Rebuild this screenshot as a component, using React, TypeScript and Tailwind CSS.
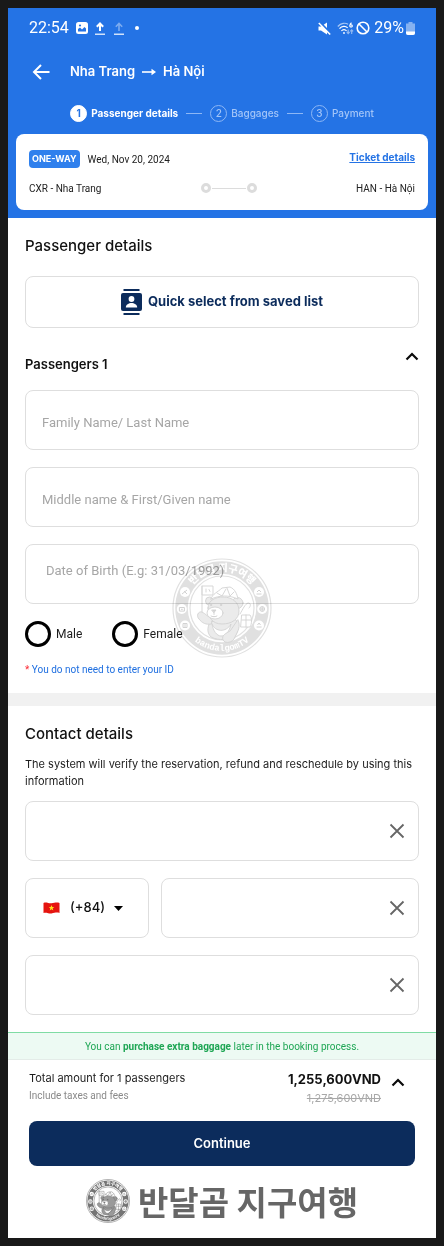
import { FC, ReactNode } from "react";

interface EmblemProps {
  id: string;
  band: string;
  fill: string;
  line: string;
  className?: string;
}

interface TextFieldProps {
  label: string;
  placeholder?: string;
  type?: string;
  inputClassName?: string;
}

const steps = ["Passenger details", "Baggages", "Payment"];

// --- Round bear logo, used as a faint mark and in the footer ---
const Emblem: FC<EmblemProps> = ({ id, band, fill, line, className }) => (
  <svg viewBox="0 0 100 100" className={className} aria-hidden="true">
    <defs>
      <path id={`${id}-top`} d="M13 50a37 37 0 0 1 74 0" />
      <path id={`${id}-bottom`} d="M7 50a43 43 0 0 0 86 0" />
    </defs>
    <circle cx="50" cy="50" r="49" fill="white" stroke={band} strokeWidth="1.2" />
    <circle cx="50" cy="50" r="40.5" fill="none" stroke={band} strokeWidth="12.5" />
    <circle cx="50" cy="50" r="32" fill="white" stroke={band} strokeWidth="1.2" />
    <text
      fill="white"
      fontSize="10"
      fontWeight="900"
      textAnchor="middle"
      fontFamily="'Noto Sans CJK KR', sans-serif"
    >
      <textPath href={`#${id}-top`} startOffset="50%">
        반달곰 지구여행
      </textPath>
    </text>
    <text
      fill="white"
      fontSize="9"
      fontWeight="700"
      textAnchor="middle"
      fontFamily="'Liberation Mono', monospace"
    >
      <textPath href={`#${id}-bottom`} startOffset="50%">
        bandalgomTV
      </textPath>
    </text>
    <g fill="white">
      <circle cx="13" cy="34" r="5" />
      <circle cx="9.8" cy="51" r="5" />
      <circle cx="13" cy="67.5" r="5" />
      <circle cx="87" cy="34" r="5" />
      <circle cx="90.2" cy="51" r="5" />
      <circle cx="87" cy="67.5" r="5" />
    </g>
    <g fill="none" stroke={line} strokeWidth="1">
      <path d="M10 36l5-4M12 33l3 3" />
      <path d="M7.4 49.5h5v3.6h-5zM9 51.3h1.8" />
      <path d="M11 65.5h4v4h-4zM13 65.5v4" />
      <path d="M84.5 36h5M85 34l2-2 2 2" />
      <circle cx="90.2" cy="51" r="2.4" />
      <path d="M87.8 51h4.8M90.2 48.6v4.8" />
      <path d="M84.6 69h5M85.5 67l1.5-2 1.5 2" />
    </g>
    <g stroke={line} strokeWidth=".9" strokeLinejoin="round" strokeLinecap="round">
      {/* backpack */}
      <path d="M70 57h8c2 3 2 9 0 12h-9zM70 62h9M74 57v12" fill="white" />
      <path d="M68 56c3-5 5-10 8-11 3 0 3 3 1 5" fill="none" />
      {/* flag */}
      <path d="M30 28v30" fill="none" />
      <path d="M30.5 28H41v9H30.5z" fill="white" />
      <path d="M34 31v3M37 31.5l1 2" fill="none" />
      {/* body */}
      <path d="M38 64c-3 6-3 11 1 15 8 4 18 3 24-1 4-5 4-11 1-16z" fill={fill} />
      <path d="M40 66c3 8 14 9 19 0-2 9-6 12-10 12s-8-5-9-12z" fill="white" />
      {/* arms */}
      <path d="M39 66c-5 1-9-1-12-5-3-3-1-8 3-7 4 2 6 5 10 7z" fill={fill} />
      <path d="M66 62c3 6 0 11-3 17-2 6-10 7-12 3-2-5 4-7 7-9z" fill={fill} />
      {/* head */}
      <circle cx="65.5" cy="45" r="5.5" fill={fill} />
      <circle cx="37.5" cy="43" r="4" fill={fill} />
      <path d="M36 50c0-8 8-11 15-11 10 0 16 6 16 14s-7 13-17 13-14-7-14-16z" fill={fill} />
      <ellipse cx="43" cy="55" rx="8" ry="6" fill="white" />
      <path d="M40 52h4l-2 2.500zM42 54.500v2M39 58c1 1 5 1 6 0" fill={line} />
      <circle cx="39" cy="47" r=".7" fill={line} />
      <circle cx="49" cy="47" r=".7" fill={line} />
      {/* hat */}
      <path d="M39 41c1-5 7-7 11-11l8-1c5 2 7 7 8 12-9-4-18-4-27 0z" fill="white" />
      <path d="M45 35l5 3 4-7M55 30l3 8 4-4" fill="none" />
    </g>
  </svg>
);

const Chevron: FC = () => (
  <svg width="14" height="9" viewBox="0 0 14 9" fill="none" aria-hidden="true">
    <path d="M1.500 7.500L7 2l5.500 5.500" stroke="#0b0b0b" strokeWidth="2.2" />
  </svg>
);

const ClearButton: FC = () => (
  <button type="button" aria-label="Clear" className="shrink-0 p-1">
    <svg width="16" height="16" viewBox="0 0 16 16" fill="none" stroke="#666" strokeWidth="1.8">
      <path d="M1.500 1.500l13 13M14.500 1.500l-13 13" />
    </svg>
  </button>
);

const TextField: FC<TextFieldProps> = ({
  label,
  placeholder,
  type = "text",
  inputClassName = "px-4 pt-1",
}) => (
  <input
    type={type}
    aria-label={label}
    placeholder={placeholder}
    className={`block h-[60px] w-full rounded-lg border border-[#dedede] bg-white font-[Roboto,sans-serif] text-[13px] placeholder:text-[#a6a6a6] ${inputClassName}`}
  />
);

const ClearableField: FC<{ label: string; type?: string }> = ({ label, type = "text" }) => (
  <div className="flex h-[60px] min-w-0 flex-1 items-center rounded-lg border border-[#dedede] pr-[9px]">
    <input type={type} aria-label={label} className="h-full min-w-0 flex-1 px-4 text-[13px]" />
    <ClearButton />
  </div>
);

const GenderOption: FC<{ children: ReactNode }> = ({ children }) => (
  <label className="flex items-center gap-[5px] font-[Roboto,sans-serif] text-[12px] text-[#1c1c1c]">
    <input
      type="radio"
      name="gender"
      className="size-[26px] appearance-none rounded-full border-3 border-black checked:border-8"
    />
    {children}
  </label>
);

const StatusBar: FC = () => (
  <div className="flex h-10 items-center justify-between pr-[21px] pl-[21px] font-[Roboto,sans-serif] text-base">
    <div className="flex items-center gap-[7px]">
      <span>22:54</span>
      <svg width="12" height="12" viewBox="0 0 12 12" aria-hidden="true">
        <rect width="12" height="12" rx="2.5" fill="white" />
        <path d="M2 9.500V7l2-1.500 2 2 2.500-2.500L10 6.500v3z" fill="#2473e5" />
        <circle cx="4" cy="3.5" r="1.1" fill="#2473e5" />
      </svg>
      <svg width="10" height="13" viewBox="0 0 10 13" fill="none" stroke="white" aria-hidden="true">
        <path d="M5 9V2M1.800 4.800L5 1.500l3.200 3.300" strokeWidth="2" />
        <path d="M0 12.200h10" strokeWidth="1.2" />
      </svg>
      <svg
        width="10"
        height="13"
        viewBox="0 0 10 13"
        fill="none"
        stroke="white"
        className="ml-[2px]"
        aria-hidden="true"
      >
        <path d="M5 9V2M1.800 4.800L5 1.500l3.200 3.300" strokeWidth="1.6" opacity=".4" />
        <path d="M0 12.200h10" strokeWidth="1.2" />
      </svg>
      <span className="ml-1 size-1 rounded-full bg-white" />
    </div>
    <div className="flex items-center">
      <svg width="13" height="13" viewBox="0 0 13 13" aria-hidden="true">
        <path d="M.5 4.500H3L9 .5v12l-6-4H.5z" fill="white" />
        <path d="M1.800 0l11 11.500" stroke="#2473e5" strokeWidth="2" />
        <path d="M.8 1l11.400 11.500" stroke="white" strokeWidth="1.5" />
      </svg>
      <svg
        width="17"
        height="13"
        viewBox="0 0 17 13"
        fill="none"
        stroke="white"
        strokeWidth="1.2"
        className="ml-[6px]"
        aria-hidden="true"
      >
        <path d="M.8 4.500C4 .8 8.500.6 11 2.300" opacity=".6" />
        <path d="M2.500 6.700c2.400-3 6-3 8.200-.8M4.400 9c1.400-1.800 3.800-1.800 5.200 0" />
        <circle cx="7" cy="11" r=".9" fill="white" stroke="none" />
        <path d="M14.500.8c-2 1.500-2.300 4.200-.4 4.200 1.700 0 1.500-2.500-.4-2" />
        <path
          d="M11.200 7.500v4M9.800 10l1.400 1.500 1.400-1.500M14.700 12V8M13.300 9.300l1.400-1.500 1.400 1.500"
          opacity=".5"
        />
      </svg>
      <svg
        width="14"
        height="14"
        viewBox="0 0 14 14"
        fill="none"
        stroke="white"
        strokeWidth="1.6"
        className="ml-[2px]"
        aria-hidden="true"
      >
        <circle cx="7" cy="7" r="5.8" />
        <path d="M3 3l8 8" />
      </svg>
      <span className="ml-1">29%</span>
      <svg width="9" height="13" viewBox="0 0 9 13" className="ml-[2px]" aria-hidden="true">
        <path
          d="M2.500 0h4v1.500H9V11a2 2 0 0 1-2 2H2a2 2 0 0 1-2-2V1.500h2.500z"
          fill="white"
          opacity=".45"
        />
        <path d="M0 9.500h9V11a2 2 0 0 1-2 2H2a2 2 0 0 1-2-2z" fill="white" />
      </svg>
    </div>
  </div>
);

const TripHeader: FC = () => (
  <header className="bg-[#2473e5] px-2 pb-2 text-white">
    <div className="-mx-2">
      <StatusBar />
    </div>

    <div className="flex h-12 items-center pl-4">
      <button type="button" aria-label="Back">
        <svg width="18" height="16" viewBox="0 0 18 16" fill="none" stroke="white" strokeWidth="2">
          <path d="M17.500 8H2M9 1L2 8l7 7" />
        </svg>
      </button>
      <h1 className="ml-5 flex items-center gap-[7px] text-[13px] font-semibold">
        Nha Trang
        <svg width="14" height="8" viewBox="0 0 14 8" aria-label="to">
          <path d="M0 4h11" stroke="white" strokeWidth="1.6" />
          <path d="M9.500.8L14 4l-4.500 3.200z" fill="white" />
        </svg>
        Hà Nội
      </h1>
    </div>

    <ol className="flex h-[34px] items-center justify-center gap-2 text-[10px] font-medium">
      {steps.map((step, index) => (
        <li
          key={step}
          className={`flex items-center gap-1 ${index === 0 ? "font-bold" : "text-[#a3c5f8]"}`}
        >
          {index > 0 && <span className="mr-1 h-px w-4 bg-[#8db7f5]" />}
          <span
            className={`flex size-[17px] items-center justify-center rounded-full border ${
              index === 0 ? "border-white bg-white text-[#2473e5]" : "border-[#8db7f5]"
            }`}
          >
            {index + 1}
          </span>
          {step}
        </li>
      ))}
    </ol>

    <section className="mt-1 rounded-lg bg-white px-[13px] pt-4 pb-[14px] font-[Roboto,sans-serif] text-[10px] text-[#222]">
      <div className="flex h-[18px] items-center">
        <span className="flex h-[18px] items-center rounded bg-[#2f80ed] px-[3px] font-[Inter,sans-serif] text-[9px] font-bold text-white">
          ONE-WAY
        </span>
        <span className="ml-2">Wed, Nov 20, 2024</span>
        <a
          href="#ticket"
          className="mb-1 ml-auto font-[Inter,sans-serif] font-bold text-[#2473e5] underline"
        >
          Ticket details
        </a>
      </div>
      <div className="mt-3 flex h-4 items-center justify-between">
        <span>CXR - Nha Trang</span>
        <span className="flex items-center">
          <span className="size-[10px] rounded-full border-3 border-[#dcdcdc]" />
          <span className="mx-px h-px w-[34px] bg-[#dcdcdc]" />
          <span className="size-[10px] rounded-full border-3 border-[#dcdcdc]" />
        </span>
        <span>HAN - Hà Nội</span>
      </div>
    </section>
  </header>
);

const PassengerSection: FC = () => (
  <section className="relative px-[17px] pt-4 pb-[15px]">
    <h2 className="text-[15px] leading-6 font-medium">Passenger details</h2>
    <button
      type="button"
      className="mt-[18px] flex h-[52px] w-full items-center justify-center gap-[6px] rounded-lg border border-[#dedede] text-[13px] font-bold text-[#0c2c5c]"
    >
      <svg width="21" height="26" viewBox="0 0 21 26" fill="#0c2c5c" aria-hidden="true">
        <path d="M2.500 0h16v2h-16zM2.500 24h16v2h-16z" />
        <rect y="4" width="21" height="18" rx="2" />
        <circle cx="10.5" cy="10" r="2.9" fill="white" />
        <path d="M4.800 18.500c0-3 3-4.500 5.700-4.500s5.700 1.500 5.700 4.500z" fill="white" />
      </svg>
      Quick select from saved list
    </button>

    <div className="mt-6 flex h-6 justify-between">
      <h3 className="text-[13px] leading-6 font-semibold">Passengers 1</h3>
      <button type="button" aria-label="Collapse passenger" className="h-[9px]">
        <Chevron />
      </button>
    </div>

    <div className="mt-[14px] flex flex-col gap-[17px]">
      <TextField label="Family Name" placeholder="Family Name/ Last Name" />
      <TextField label="Given name" placeholder="Middle name & First/Given name" />
      <TextField
        label="Date of Birth"
        placeholder="Date of Birth (E.g: 31/03/1992)"
        inputClassName="px-5 pb-2"
      />
    </div>

    <div className="mt-4 flex h-7 items-center gap-[30px]">
      <GenderOption>Male</GenderOption>
      <GenderOption>Female</GenderOption>
    </div>
    <p className="mt-[14px] font-[Roboto,sans-serif] text-[10px] leading-4 text-[#1f6fe0]">
      <span className="text-red-500">*</span> You do not need to enter your ID
    </p>

    <div className="pointer-events-none absolute bottom-[35px] left-1/2 size-[100px] -translate-x-1/2 mix-blend-multiply">
      <Emblem id="mark" band="#e0e0e0" fill="#ebebeb" line="#d2d2d2" />
    </div>
  </section>
);

const ContactSection: FC = () => (
  <section className="border-t-[13px] border-[#f1f1f1] px-[17px] pt-4 pb-[17px]">
    <h2 className="text-[15px] leading-6 font-medium">Contact details</h2>
    <p className="mt-[10px] text-[11px] leading-[17px] text-[#1c1c1c]">
      The system will verify the reservation, refund and reschedule by using this information
    </p>
    <div className="mt-[11px] flex flex-col gap-[17px]">
      <div className="flex">
        <ClearableField label="Full name" />
      </div>
      <div className="flex gap-3">
        <label className="relative flex h-[60px] w-[124px] items-center rounded-lg border border-[#dedede] pl-[17px]">
          <svg width="17" height="12" viewBox="0 0 17 12" aria-hidden="true">
            <path
              d="M.5 1c3-1.200 5 .6 8 .3s5-1.300 8-.3v10c-3-1-5 .2-8 .4S3 9.900.5 11z"
              fill="#e5140f"
            />
            <path
              d="M8.500 3l.8 2h2l-1.600 1.300.6 2.100-1.800-1.200-1.800 1.200.6-2.100L5.700 5h2z"
              fill="#ffdf1b"
            />
          </svg>
          <select
            aria-label="Country code"
            className="h-full flex-1 appearance-none pl-[10px] text-[13px] font-medium text-[#111]"
          >
            <option>(+84)</option>
          </select>
          <svg
            width="9"
            height="5"
            viewBox="0 0 9 5"
            className="pointer-events-none absolute right-[25px]"
            aria-hidden="true"
          >
            <path d="M0 0h9L4.500 5z" fill="black" />
          </svg>
        </label>
        <ClearableField label="Phone number" type="tel" />
      </div>
      <div className="flex">
        <ClearableField label="Email" type="email" />
      </div>
    </div>
  </section>
);

const Footer: FC = () => (
  <footer>
    <p className="flex h-7 items-center justify-center border-t border-b border-t-[#7fdca4] border-b-[#e4ece8] bg-[#edfaf3] font-[Roboto,sans-serif] text-[10px] text-[#1ea654]">
      <span>
        You can <strong className="font-bold">purchase extra baggage</strong> later in the booking
        process.
      </span>
    </p>
    <div className="px-[21px] pt-2">
      <div className="flex justify-between">
        <div>
          <p className="text-[11px] leading-5 text-[#1c1c1c]">Total amount for 1 passengers</p>
          <p className="font-[Roboto,sans-serif] text-[10px] leading-4 text-[#8a8a8a]">
            Include taxes and fees
          </p>
        </div>
        <div className="flex items-start gap-[10px] pr-[10px] text-right">
          <div>
            <p className="text-[13px] leading-[22px] font-bold">1,255,600VND</p>
            <p className="text-[11px] leading-4 text-[#a8a8a8] line-through">1,275,600VND</p>
          </div>
          <button type="button" aria-label="Show price details" className="mt-[10px]">
            <Chevron />
          </button>
        </div>
      </div>
      <button
        type="button"
        className="mt-[15px] h-[45px] w-full rounded-lg bg-[#0c2c5c] text-[13px] font-semibold text-white"
      >
        Continue
      </button>
    </div>
    <div className="flex h-[72px] items-center justify-center gap-2 pb-[2px]">
      <Emblem id="brand" band="#757575" fill="#9a9a9a" line="#666666" className="size-11" />
      <span className="font-['Noto_Sans_CJK_KR',sans-serif] text-[33px] leading-10 font-bold text-[#666]">
        반달곰 지구여행
      </span>
    </div>
  </footer>
);

const App: FC = () => (
  <div className="min-h-screen bg-[#191919] p-2 font-[Inter,sans-serif] text-[#111]">
    <main className="bg-white">
      <TripHeader />
      <PassengerSection />
      <ContactSection />
      <Footer />
    </main>
  </div>
);

export default App;
